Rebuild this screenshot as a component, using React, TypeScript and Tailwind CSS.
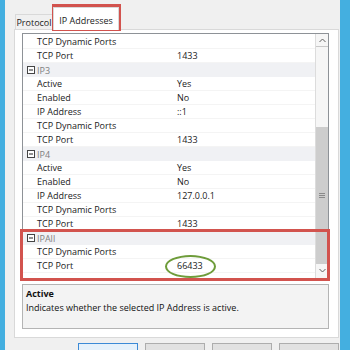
type Row = { name?: string; value?: string; cat?: string }

const rows: Row[] = [
  { name: 'TCP Dynamic Ports', value: '' },
  { name: 'TCP Port', value: '1433' },
  { cat: 'IP3' },
  { name: 'Active', value: 'Yes' },
  { name: 'Enabled', value: 'No' },
  { name: 'IP Address', value: '::1' },
  { name: 'TCP Dynamic Ports', value: '' },
  { name: 'TCP Port', value: '1433' },
  { cat: 'IP4' },
  { name: 'Active', value: 'Yes' },
  { name: 'Enabled', value: 'No' },
  { name: 'IP Address', value: '127.0.0.1' },
  { name: 'TCP Dynamic Ports', value: '' },
  { name: 'TCP Port', value: '1433' },
  { cat: 'IPAll' },
  { name: 'TCP Dynamic Ports', value: '' },
  { name: 'TCP Port', value: '66433' },
  { name: '', value: '' },
]

function MinusBox() {
  return (
    <svg width="8" height="8" viewBox="0 0 8 8" className="block">
      <rect x="0.5" y="0.5" width="7" height="7" fill="#fff" stroke="#444" />
      <line x1="2" y1="4" x2="6" y2="4" stroke="#222" />
    </svg>
  )
}

function GridRow({ row }: { row: Row }) {
  if (row.cat) {
    return (
      <div className="flex h-[14px] items-center bg-[#f0f1f4]">
        <div className="flex w-[14px] justify-center pl-px">
          <MinusBox />
        </div>
        <span className="text-[#808080]">{row.cat}</span>
      </div>
    )
  }
  return (
    <div className="flex h-[14px] items-center border-b border-[#f4f4f4]">
      <div className="w-[14px]" />
      <span className="w-[140px] text-[#1b1b1b]">{row.name}</span>
      <span className="text-[#1b1b1b]">{row.value}</span>
    </div>
  )
}

function Chevron({ down }: { down?: boolean }) {
  return (
    <svg width="7" height="5" viewBox="0 0 7 5">
      <polyline
        points={down ? '0.5,1 3.5,4 6.5,1' : '0.5,4 3.5,1 6.5,4'}
        fill="none"
        stroke="#606060"
      />
    </svg>
  )
}

function ScrollBar() {
  return (
    <div className="flex w-[13px] shrink-0 flex-col border-l border-[#dcdcdc] bg-[#f6f6f6]">
      <div className="flex h-[13px] shrink-0 items-center justify-center border-b border-[#c8c8c8]">
        <Chevron />
      </div>
      <div className="h-[80px] shrink-0" />
      <div className="flex h-[137px] shrink-0 flex-col items-center justify-center gap-px bg-[#cdcdcd]">
        <div className="h-px w-[6px] bg-[#8a8a8a]" />
        <div className="h-px w-[6px] bg-[#8a8a8a]" />
        <div className="h-px w-[6px] bg-[#8a8a8a]" />
      </div>
      <div className="flex h-[13px] shrink-0 items-center justify-center">
        <Chevron down />
      </div>
    </div>
  )
}

function Button({ label, primary }: { label: string; primary?: boolean }) {
  return (
    <div
      className={
        primary
          ? 'flex h-[23px] w-[60px] items-center justify-center border border-[#3c8ad6] bg-[#e5f1fb] text-[#222]'
          : 'flex h-[23px] w-[60px] items-center justify-center border border-[#adadad] bg-[#e1e1e1] text-[#222]'
      }
    >
      {label}
    </div>
  )
}

export default function App() {
  return (
    <div
      className="relative flex h-[350px] w-[350px] overflow-hidden bg-[#44afe0] text-[9px] leading-none"
      style={{ fontFamily: '"Open Sans", "Noto Sans", sans-serif' }}
    >
      <div className="ml-[5px] flex h-full w-[335px] flex-col bg-[#f0f0f0]">
        {/* tabs */}
        <div className="flex h-[29px] shrink-0 items-end pl-[10px]">
          <div className="flex h-[15px] w-[38px] items-center justify-center border border-b-0 border-[#d9d9d9] bg-[#f0f0f0] text-[#222]">
            Protocol
          </div>
          <div className="relative z-10 -mb-px flex h-[23px] w-[66px] items-start justify-center border border-b-0 border-[#d9d9d9] bg-white pt-[8px] text-[#222]">
            IP Addresses
          </div>
        </div>

        {/* panel */}
        <div className="ml-[9px] flex h-[309px] w-[325px] shrink-0 flex-col border border-[#d9d9d9] bg-white pl-[7px] pt-[3px]">
          <div className="flex h-[246px] w-[307px] shrink-0 border border-[#8e9297] bg-white">
            <div className="flex-1 overflow-hidden pt-px">
              {rows.map((r, i) => (
                <GridRow key={i} row={r} />
              ))}
            </div>
            <ScrollBar />
          </div>

          <div className="mt-[5px] h-[45px] w-[307px] shrink-0 border border-[#b4b4b4] bg-[#f3f3f3] px-[3px] pt-[4px]">
            <div className="font-bold text-[#111]">Active</div>
            <div className="mt-[5px] text-[#111]">Indicates whether the selected IP Address is active.</div>
          </div>
        </div>

        {/* buttons */}
        <div className="mt-[5px] flex shrink-0 gap-[7px] pl-[73px]">
          <Button label="OK" primary />
          <Button label="Cancel" />
          <Button label="Apply" />
          <Button label="Help" />
        </div>
      </div>

      {/* annotations */}
      <div className="absolute left-[52px] top-[4px] h-[27px] w-[69px] border-[3px] border-[#d2534e]" />
      <div className="absolute left-[20px] top-[229px] h-[52px] w-[310px] border-[3px] border-[#d2534e]" />
      <div className="absolute left-[165px] top-[255px] h-[23px] w-[51px] rounded-[50%] border-2 border-[#6e9c3a]" />
    </div>
  )
}
